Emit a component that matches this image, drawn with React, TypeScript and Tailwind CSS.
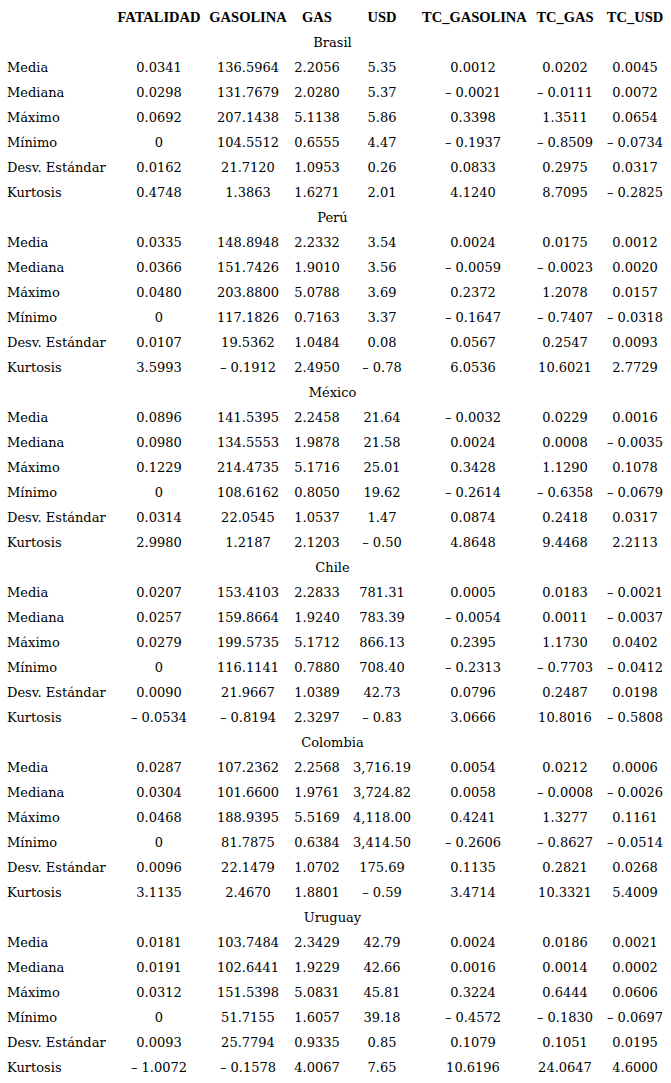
const columns = ['FATALIDAD', 'GASOLINA', 'GAS', 'USD', 'TC_GASOLINA', 'TC_GAS', 'TC_USD'];
const labels = ['Media', 'Mediana', 'Máximo', 'Mínimo', 'Desv. Estándar', 'Kurtosis'];

const groups: { name: string; rows: string[][] }[] = [
  {
    name: 'Brasil',
    rows: [
      ['0.0341', '136.5964', '2.2056', '5.35', '0.0012', '0.0202', '0.0045'],
      ['0.0298', '131.7679', '2.0280', '5.37', '-0.0021', '-0.0111', '0.0072'],
      ['0.0692', '207.1438', '5.1138', '5.86', '0.3398', '1.3511', '0.0654'],
      ['0', '104.5512', '0.6555', '4.47', '-0.1937', '-0.8509', '-0.0734'],
      ['0.0162', '21.7120', '1.0953', '0.26', '0.0833', '0.2975', '0.0317'],
      ['0.4748', '1.3863', '1.6271', '2.01', '4.1240', '8.7095', '-0.2825'],
    ],
  },
  {
    name: 'Perú',
    rows: [
      ['0.0335', '148.8948', '2.2332', '3.54', '0.0024', '0.0175', '0.0012'],
      ['0.0366', '151.7426', '1.9010', '3.56', '-0.0059', '-0.0023', '0.0020'],
      ['0.0480', '203.8800', '5.0788', '3.69', '0.2372', '1.2078', '0.0157'],
      ['0', '117.1826', '0.7163', '3.37', '-0.1647', '-0.7407', '-0.0318'],
      ['0.0107', '19.5362', '1.0484', '0.08', '0.0567', '0.2547', '0.0093'],
      ['3.5993', '-0.1912', '2.4950', '-0.78', '6.0536', '10.6021', '2.7729'],
    ],
  },
  {
    name: 'México',
    rows: [
      ['0.0896', '141.5395', '2.2458', '21.64', '-0.0032', '0.0229', '0.0016'],
      ['0.0980', '134.5553', '1.9878', '21.58', '0.0024', '0.0008', '-0.0035'],
      ['0.1229', '214.4735', '5.1716', '25.01', '0.3428', '1.1290', '0.1078'],
      ['0', '108.6162', '0.8050', '19.62', '-0.2614', '-0.6358', '-0.0679'],
      ['0.0314', '22.0545', '1.0537', '1.47', '0.0874', '0.2418', '0.0317'],
      ['2.9980', '1.2187', '2.1203', '-0.50', '4.8648', '9.4468', '2.2113'],
    ],
  },
  {
    name: 'Chile',
    rows: [
      ['0.0207', '153.4103', '2.2833', '781.31', '0.0005', '0.0183', '-0.0021'],
      ['0.0257', '159.8664', '1.9240', '783.39', '-0.0054', '0.0011', '-0.0037'],
      ['0.0279', '199.5735', '5.1712', '866.13', '0.2395', '1.1730', '0.0402'],
      ['0', '116.1141', '0.7880', '708.40', '-0.2313', '-0.7703', '-0.0412'],
      ['0.0090', '21.9667', '1.0389', '42.73', '0.0796', '0.2487', '0.0198'],
      ['-0.0534', '-0.8194', '2.3297', '-0.83', '3.0666', '10.8016', '-0.5808'],
    ],
  },
  {
    name: 'Colombia',
    rows: [
      ['0.0287', '107.2362', '2.2568', '3,716.19', '0.0054', '0.0212', '0.0006'],
      ['0.0304', '101.6600', '1.9761', '3,724.82', '0.0058', '-0.0008', '-0.0026'],
      ['0.0468', '188.9395', '5.5169', '4,118.00', '0.4241', '1.3277', '0.1161'],
      ['0', '81.7875', '0.6384', '3,414.50', '-0.2606', '-0.8627', '-0.0514'],
      ['0.0096', '22.1479', '1.0702', '175.69', '0.1135', '0.2821', '0.0268'],
      ['3.1135', '2.4670', '1.8801', '-0.59', '3.4714', '10.3321', '5.4009'],
    ],
  },
  {
    name: 'Uruguay',
    rows: [
      ['0.0181', '103.7484', '2.3429', '42.79', '0.0024', '0.0186', '0.0021'],
      ['0.0191', '102.6441', '1.9229', '42.66', '0.0016', '0.0014', '0.0002'],
      ['0.0312', '151.5398', '5.0831', '45.81', '0.3224', '0.6444', '0.0606'],
      ['0', '51.7155', '1.6057', '39.18', '-0.4572', '-0.1830', '-0.0697'],
      ['0.0093', '25.7794', '0.9335', '0.85', '0.1079', '0.1051', '0.0195'],
      ['-1.0072', '-0.1578', '4.0067', '7.65', '10.6196', '24.0647', '4.6000'],
    ],
  },
];

// negatives are typeset as "– 0.0021" in the original
const fmt = (v: string) => (v.startsWith('-') ? '\u2013 ' + v.slice(1) : v);

const gridCols = 'grid grid-cols-[114px_90px_88px_50px_80px_102px_82px_58px] h-[25px] items-center';

export default function App() {
  return (
    <div className="w-[671px] min-h-[1083px] bg-white text-black pt-[5px]">
      {/* header */}
      <div className={`${gridCols} font-['Liberation_Serif',serif] font-bold text-[14.5px]`}>
        <div />
        {columns.map((c) => (
          <div key={c} className="text-center whitespace-nowrap">
            {c}
          </div>
        ))}
      </div>

      <div className="font-['DejaVu_Serif',serif] text-[13px]">
        {groups.map((g) => (
          <div key={g.name}>
            <div className="w-[651px] ml-[7px] h-[25px] flex items-center justify-center">{g.name}</div>
            {g.rows.map((row, i) => (
              <div key={i} className={gridCols}>
                <div className="pl-[7px] whitespace-nowrap">{labels[i]}</div>
                {row.map((v, j) => (
                  <div key={j} className="text-center whitespace-nowrap">
                    {fmt(v)}
                  </div>
                ))}
              </div>
            ))}
          </div>
        ))}
      </div>
    </div>
  );
}
